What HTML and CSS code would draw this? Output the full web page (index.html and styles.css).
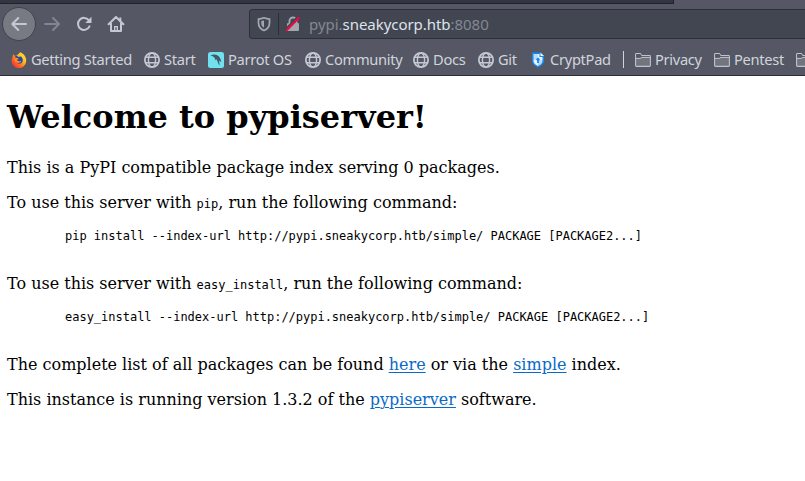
FILE: index.html
```html
<!DOCTYPE html>
<html lang="en">
<head>
<meta charset="utf-8">
<title>Welcome to pypiserver!</title>
<link rel="stylesheet" href="styles.css">
</head>
<body>
<svg class="defs" aria-hidden="true">
  <symbol id="globe" viewBox="0 0 16 16"><g fill="none" stroke="#c4c8d2" stroke-width="1.4"><circle cx="8" cy="8" r="7.1" stroke-width="1.8"/><ellipse cx="8" cy="8" rx="3.6" ry="7"/><path d="M2 5.2h12M2 10.8h12"/></g></symbol>
  <symbol id="folder" viewBox="0 0 16 16"><path d="M.6 13.6V2.4Q.6 1.5 1.5 1.5H5.2L7 3.5H14.5Q15.4 3.5 15.4 4.4V13.6Q15.4 14.4 14.5 14.4H1.5Q.6 14.4.6 13.6Z" fill="#72757e" stroke="#c0c3cb" stroke-width="1.1"/><path d="M1.200 2h4L6.500 4.100H14.800V5H6.500L5 6H1.200Z" fill="#555864"/><path d="M.8 6.400H5.300L7 5.400H15.200" fill="none" stroke="#c0c3cb"/></symbol>
</svg>
<header class="chrome">
  <div class="tabs"></div>
  <div class="toolbar">
    <div class="back"><svg width="18" height="16" viewBox="0 0 18 16"><path d="M16 8H2.5M8.3 2L2.3 8l6 6" class="line"/></svg></div>
    <svg class="forward" width="18" height="16" viewBox="0 0 18 16"><path d="M1 8h13.5M9 2l6 6-6 6" class="line"/></svg>
    <svg class="reload" width="16" height="16" viewBox="0 0 16 16"><path d="M12.8 4.2A6 6 0 1 0 13.5 10.4" class="line"/><path d="M15.5.8V7H9.3Z" fill="#c4c8d2"/></svg>
    <svg class="home" width="18" height="16" viewBox="0 0 18 16"><path d="M1.600 8.200L9 1l7.400 7.200M4 7.200V14.900H14V7.200" class="line"/><path d="M12.300 1.500h2v4h-2z" fill="#c4c8d2"/><path d="M7.700 15v-4.400h2.600V15" fill="none" stroke="#c4c8d2" stroke-width="1.400"/></svg>
    <div class="url">
      <svg class="shield" width="14" height="16" viewBox="0 0 14 16"><path d="M7 1.8C5 2.6 3 3 1.5 3.1V7C1.5 11 3.7 13.2 7 14.5c3.300-1.300 5.500-3.500 5.500-7.500V3.100C11 3 9 2.600 7 1.800Z" fill="none" stroke="#a2a7b0" stroke-width="1.700"/><path d="M7 4.500v7.200C5 10.500 4.300 9 4.300 7V5Z" fill="#a2a7b0"/></svg>
      <span class="divider"></span>
      <svg class="lock" width="16" height="16" viewBox="0 0 16 16"><path d="M4.500 8V5a3.500 3.500 0 0 1 7 0v3" fill="none" stroke="#a2a7b0" stroke-width="1.900"/><rect x="2" y="7" width="12" height="8" rx="1" fill="#a2a7b0"/><path d="M.5 13.500L12.800.8" stroke="#414651" stroke-width="2"/><path d="M1.200 14.800L14.500 1.300" stroke="#f5053e" stroke-width="2"/></svg>
      <span class="address">pypi.<b>sneakycorp.htb</b>:8080</span>
    </div>
  </div>
  <nav class="bookmarks">
    <span class="getting"><svg viewBox="0 0 16 16"><defs><linearGradient id="fire" x1="1" y1="0" x2="0" y2="1"><stop offset="0" stop-color="#fff44f"/><stop offset=".35" stop-color="#ffbd20"/><stop offset=".65" stop-color="#ff6420"/><stop offset="1" stop-color="#f0145c"/></linearGradient></defs><path d="M2.200 2.300L4 4 5 3.800 7.500 2 9 .3C12.500 1.500 15.500 5 15.200 9A7.300 7.300 0 1 1 1.200 6Z" fill="url(#fire)"/><path d="M4 4.500L6 3.500 7 5l3-.5C12 6 12.500 9.500 10.500 11 8 12.600 5 11 4.500 8.500Z" fill="#204baa"/><path d="M3.700 5.500l3 .5 1 .8-2 1.500 2.600 1 2-.6C9.500 11.500 5 12 3.500 8.500Z" fill="#ff8a20"/></svg>Getting Started</span>
    <span class="start"><svg><use href="#globe"/></svg>Start</span>
    <span class="parrot"><svg viewBox="0 0 16 16"><rect width="16" height="16" rx="2.500" fill="#70e1ef"/><path d="M2.500 3.500C5 1.800 9 2 11 4.500c2 2.500 1.800 4 2.400 5.500L11.200 8.600 11.500 13.500C10 12 10 9 8.200 7L7.600 8.500C7 6 6 4.300 2.500 3.500Z" fill="#475661"/></svg>Parrot OS</span>
    <span class="community"><svg><use href="#globe"/></svg>Community</span>
    <span class="docs"><svg><use href="#globe"/></svg>Docs</span>
    <span class="git"><svg><use href="#globe"/></svg>Git</span>
    <span class="cryptpad"><svg viewBox="0 0 16 16"><path d="M2 .5h8.500L14 4V9c0 3-2.800 5-6 6.500C4.800 14 2 12 2 9Z" fill="#1688ee"/><path d="M3.500 2H8V8H3.500ZM8 8h4.500v1c0 2.400-2 3.700-4.500 4.900Z" fill="#b8dcfb"/><path d="M8 2h1.500v3h3V8H8ZM3.500 8H8v5.900C5.500 12.700 3.500 11.400 3.500 9Z" fill="#e9f4ff"/><circle cx="8" cy="7.300" r="1.600" fill="#1688ee"/><path d="M7.400 7h1.200l.4 4H7Z" fill="#1688ee"/><path d="M10.500 .5v3.500h3.500Z" fill="#e9f4ff"/></svg>CryptPad</span>
    <i class="separator"></i>
    <span class="privacy"><svg><use href="#folder"/></svg>Privacy</span>
    <span class="pentest"><svg><use href="#folder"/></svg>Pentest</span>
    <span><svg><use href="#folder"/></svg></span>
  </nav>
</header>
<main>
  <h1>Welcome to pypiserver!</h1>
  <p>This is a PyPI compatible package index serving 0 packages.</p>
  <p>To use this server with <code>pip</code>, run the following command:</p>
  <pre>pip install --index-url http://pypi.sneakycorp.htb/simple/ PACKAGE [PACKAGE2...]</pre>
  <p>To use this server with <code>easy_install</code>, run the following command:</p>
  <pre>easy_install --index-url http://pypi.sneakycorp.htb/simple/ PACKAGE [PACKAGE2...]</pre>
  <p>The complete list of all packages can be found <a href="#">here</a> or via the <a href="#">simple</a> index.</p>
  <p>This instance is running version 1.3.2 of the <a href="#">pypiserver</a> software.</p>
</main>
</body>
</html>
```
FILE: styles.css
```css
* { box-sizing: border-box; }
body { margin: 0; background: #fff; color: #000; overflow: hidden; }
svg { display: block; flex: none; }
.defs { display: none; }
.line { fill: none; stroke: #c4c8d2; stroke-width: 2; stroke-linecap: round; stroke-linejoin: round; }
.chrome { height: 76px; background: #555864; border-bottom: 1px solid #2b2c39; font-family: "Noto Sans", sans-serif; }
.tabs { width: 674px; height: 4px; background: #323641; border-right: 1px solid #20232e; border-bottom: 1px solid #20232e; }
.toolbar { height: 40px; display: flex; align-items: center; padding-left: 2px; }
.back { flex: none; width: 34px; height: 34px; border-radius: 50%; background: #777a82; border: 1px solid #40434d; display: flex; align-items: center; justify-content: center; }
.forward { margin-left: 8px; opacity: .4; }
.reload { margin-left: 14px; }
.home { margin-left: 15px; }
.url { height: 30px; width: 570px; margin-left: 124px; flex: none; background: #414651; border: 1px solid #2d2f3d; border-radius: 3px; display: flex; align-items: center; }
.shield { margin-left: 7px; }
.divider { width: 1px; height: 22px; background: #2b2e39; margin-left: 7px; }
.lock { margin-left: 6px; }
.address { margin-left: 8px; font-size: 15px; letter-spacing: -.04px; color: #848893; white-space: pre; }
.address b { font-weight: 400; color: #dfe3eb; }
.bookmarks { height: 31px; display: flex; align-items: center; padding: 0 0 1px 11px; font-size: 14.67px; line-height: 20px; letter-spacing: -.3px; color: #d0d4dd; white-space: nowrap; }
.bookmarks span { display: flex; align-items: center; gap: 4px; flex: none; }
.bookmarks svg { width: 16px; height: 16px; margin-top: 2px; }
.getting { width: 133px; }
.start { width: 64px; }
.parrot { width: 97px; }
.community { width: 108px; }
.docs { width: 65px; }
.git { width: 52px; }
.cryptpad { width: 93px; }
.separator { width: 1px; height: 17px; background: #d0d3db; margin-right: 11px; flex: none; }
.privacy { width: 79px; }
.pentest { width: 82px; }
main { padding-left: 7px; font: 16px/19px "DejaVu Serif", serif; display: flow-root; }
h1 { font-size: 32px; line-height: 37px; margin: 23px 0 22px; }
p { margin: 16px 0; }
code, pre { font-family: "DejaVu Sans Mono", monospace; font-size: 12px; }
code { line-height: 1; }
pre { line-height: 14px; margin: 17px 0 31px; padding-left: 58px; letter-spacing: -.012px; }
a { color: #0969c8; text-decoration-thickness: 1px; text-underline-offset: 2px; }
```
